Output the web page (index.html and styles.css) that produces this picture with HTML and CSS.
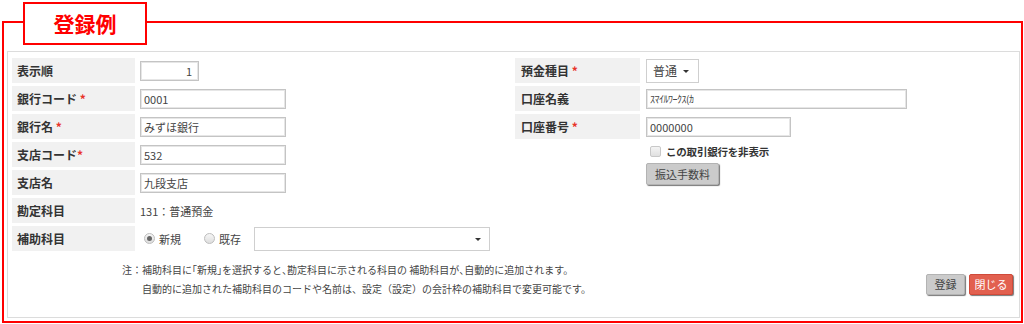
FILE: index.html
```html
<!DOCTYPE html>
<html lang="ja">
<head>
<meta charset="utf-8">
<link rel="stylesheet" href="styles.css">
</head>
<body>
<div class="frame">
  <div class="title">登録例</div>
  <div class="panel">
    <div class="cols">
      <div class="col col-left">
        <div class="lbl">表示順</div>
        <div class="fld"><span class="inp inp-num">1</span></div>

        <div class="lbl">銀行コード <span class="req">*</span></div>
        <div class="fld"><span class="inp inp-md">0001</span></div>

        <div class="lbl">銀行名 <span class="req">*</span></div>
        <div class="fld"><span class="inp inp-md">みずほ銀行</span></div>

        <div class="lbl">支店コード<span class="req">*</span></div>
        <div class="fld"><span class="inp inp-md">532</span></div>

        <div class="lbl">支店名</div>
        <div class="fld"><span class="inp inp-md">九段支店</span></div>

        <div class="lbl">勘定科目</div>
        <div class="fld"><span class="val">131：普通預金</span></div>

        <div class="lbl">補助科目</div>
        <div class="fld fld-radio">
          <span class="radio"><span class="dot on"></span>新規</span>
          <span class="radio"><span class="dot"></span>既存</span>
          <span class="sel sel-wide"><span class="caret"></span></span>
        </div>
      </div>

      <div class="col col-right">
        <div class="lbl">預金種目 <span class="req">*</span></div>
        <div class="fld"><span class="sel sel-small">普通<span class="caret"></span></span></div>

        <div class="lbl">口座名義</div>
        <div class="fld"><span class="inp inp-lg kana">ｽﾏｲﾙﾜｰｸｽ(ｶ</span></div>

        <div class="lbl">口座番号 <span class="req">*</span></div>
        <div class="fld"><span class="inp inp-acc">0000000</span></div>

        <div class="blank"></div>
        <div class="fld fld-check">
          <span class="check"><span class="box"></span>この取引銀行を非表示</span>
        </div>

        <div class="blank"></div>
        <div class="fld fld-btn"><span class="btn btn-gray btn-fee">振込手数料</span></div>
      </div>
    </div>

    <div class="footer">
      <div class="note">
        <p>注：補助科目に<span class="nb">「</span>新規<span class="nb">」</span>を選択すると<span class="nb">、</span>勘定科目に示される科目の 補助科目が<span class="nb">、</span>自動的に追加されます。</p>
        <p class="indent">自動的に追加された補助科目のコードや名前は、設定（設定）の会計枠の補助科目で変更可能です。</p>
      </div>
      <div class="actions">
        <span class="btn btn-gray">登録</span>
        <span class="btn btn-red">閉じる</span>
      </div>
    </div>
  </div>
</div>
</body>
</html>
```

FILE: styles.css
```css
* { box-sizing: border-box; }
html, body { margin: 0; padding: 0; background: #fff; }
body {
  font-family: "Noto Sans CJK JP", "Noto Sans", sans-serif;
  color: #333;
  width: 1024px;
  height: 324px;
  overflow: hidden;
}
.frame {
  margin: 21px 1px 0 2px;
  height: 302px;
  border: 2px solid #f00;
  display: flex;
  flex-direction: column;
}
.title {
  margin: -21px 0 0 19px;
  width: 124px;
  height: 43px;
  border: 2px solid #f00;
  background: #fff;
  color: #f00;
  font-weight: bold;
  font-size: 21px;
  line-height: 38px;
  text-align: center;
}
.panel {
  margin: 6px 1px 0 3px;
  height: 267px;
  border: 1px solid #dcdcdc;
  padding: 6px 6px 0 4px;
  display: flex;
  flex-direction: column;
}
.cols { display: flex; }
.col {
  display: grid;
  grid-auto-rows: 25px;
  row-gap: 3px;
  align-items: center;
}
.col-left { width: 503px; grid-template-columns: 123px 1fr; column-gap: 5px; }
.col-right { grid-template-columns: 125px 1fr; column-gap: 6px; grid-template-rows: 25px 25px 25px 18px 22px; }
.lbl {
  height: 25px;
  background: #f1f1f1;
  font-weight: bold;
  font-size: 12px;
  line-height: 25px;
  padding-left: 5px;
  color: #333;
  white-space: nowrap;
}
.col-right .lbl { padding-left: 6px; }
.req { color: #e8322a; }
.fld { display: flex; align-items: center; height: 25px; }
.inp {
  display: block;
  height: 20px;
  border: 1px solid #c4c4c4;
  box-shadow: inset 0 0 0 1px #e6e6e6;
  background: #fff;
  font-size: 11px;
  line-height: 18px;
  padding: 0 3px;
  color: #444;
  white-space: nowrap;
}
.inp-num { width: 59px; text-align: right; padding-right: 6px; }
.inp-md { width: 146px; }
.inp-lg { width: 261px; }
.inp-acc { width: 145px; }
.kana { font-size: 10px; letter-spacing: -0.5px; }
.val { font-size: 11px; color: #444; padding-left: 0; }
.fld-radio { gap: 0; }
.radio {
  display: flex;
  align-items: center;
  font-size: 11px;
  color: #444;
  margin-left: 4px;
  width: 60px;
}
.radio + .radio { width: 50px; margin-left: 0; }
.dot {
  width: 11px;
  height: 11px;
  border-radius: 50%;
  border: 1px solid #bdbdbd;
  background: linear-gradient(#f6f6f6, #dedede);
  margin-right: 4px;
  position: relative;
}
.dot.on::after {
  content: "";
  position: absolute;
  left: 2px; top: 2px;
  width: 5px; height: 5px;
  border-radius: 50%;
  background: #666;
}
.sel {
  display: flex;
  align-items: center;
  height: 24px;
  border: 1px solid #cfcfcf;
  background: #fff;
  font-size: 12px;
  color: #444;
  position: relative;
}
.sel-wide { width: 236px; }
.sel-small { width: 53px; padding-left: 6px; }
.caret {
  position: absolute;
  right: 8px;
  top: 10px;
  width: 0; height: 0;
  border-left: 3px solid transparent;
  border-right: 3px solid transparent;
  border-top: 3px solid #333;
}
.sel-small .caret { right: 9px; }
.blank { height: 1px; }
.fld-check { height: 18px; }
.check {
  display: flex;
  align-items: center;
  font-weight: bold;
  font-size: 10.5px;
  letter-spacing: -0.2px;
  color: #333;
  margin-left: 4px;
}
.box {
  width: 11px; height: 11px;
  border: 1px solid #c8c8c8;
  background: linear-gradient(#f4f4f4, #e0e0e0);
  border-radius: 2px;
  margin-right: 5px;
}
.fld-btn { height: 22px; }
.btn {
  display: inline-block;
  height: 21px;
  font-size: 11px;
  line-height: 19px;
  text-align: center;
  border-radius: 2px;
  white-space: nowrap;
}
.btn-gray {
  background: #cbcbcb;
  border: 1px solid #b3b3b3;
  color: #444;
  box-shadow: 1px 1px 1px #777;
}
.btn-fee { width: 73px; height: 22px; line-height: 20px; }
.btn-red {
  background: #e2604f;
  border: 1px solid #d04a3a;
  color: #fff;
  box-shadow: 1px 1px 1px #777;
}
.footer {
  display: flex;
  align-items: flex-start;
  margin-top: 9px;
}
.note {
  margin-left: 110px;
  font-size: 10px;
  line-height: 19px;
  color: #444;
  white-space: nowrap;
}
.note p { margin: 0; }
.note .nb { font-feature-settings: "halt"; }
.note .indent { padding-left: 20px; }
.actions {
  margin-left: auto;
  margin-top: 14px;
  display: flex;
  gap: 4px;
}
.actions .btn-gray { width: 39px; }
.actions .btn-red { width: 44px; }
```
